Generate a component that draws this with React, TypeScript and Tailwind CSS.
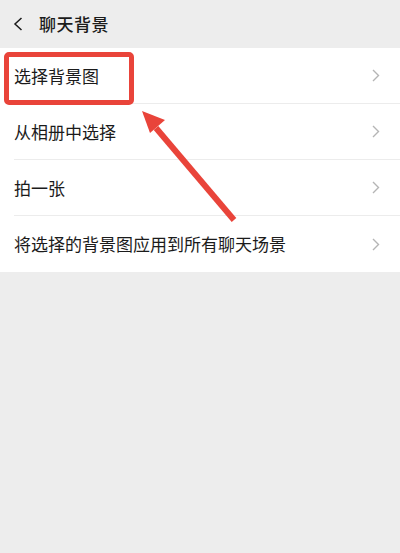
const rows = ['选择背景图', '从相册中选择', '拍一张', '将选择的背景图应用到所有聊天场景'];

function Chevron() {
  return (
    <svg width="8" height="13" viewBox="0 0 8 13" fill="none">
      <path d="M1 1l5.5 5.5L1 12" stroke="#b5b5b5" strokeWidth="1.4" />
    </svg>
  );
}

export default function App() {
  return (
    <div
      className="relative w-[400px] h-[553px] bg-[#ededed] overflow-hidden text-[#1b1b1b]"
      style={{ fontFamily: '"Noto Sans CJK SC", "Noto Sans", sans-serif' }}
    >
      {/* Header */}
      <div className="h-[48px] flex items-center pl-[13px]">
        <svg width="11" height="14" viewBox="0 0 11 14" fill="none">
          <path d="M8.5 1L2 7l6.5 6" stroke="#1b1b1b" strokeWidth="1.5" />
        </svg>
        <span className="ml-[15px] text-[17px] font-medium tracking-[0.5px]">聊天背景</span>
      </div>

      {/* List */}
      <div className="bg-white">
        {rows.map((r, i) => (
          <div key={r} className="pl-[14px]">
            <div
              className={`h-[56px] flex items-center justify-between pr-[20px] ${
                i < rows.length - 1 ? 'border-b border-[#ececec]' : ''
              }`}
            >
              <span className="text-[17px]">{r}</span>
              <Chevron />
            </div>
          </div>
        ))}
      </div>

      {/* Annotation box */}
      <div className="absolute left-[4px] top-[52px] w-[130px] h-[53px] border-[5px] border-[#e9443a] rounded-[5px]" />

      {/* Annotation arrow */}
      <svg className="absolute left-0 top-0" width="400" height="553" viewBox="0 0 400 553">
        <line x1="234" y1="220" x2="156" y2="128" stroke="#e9443a" strokeWidth="6" strokeLinecap="butt" />
        <polygon points="142,111 165,120 150,133" fill="#e9443a" />
      </svg>
    </div>
  );
}
